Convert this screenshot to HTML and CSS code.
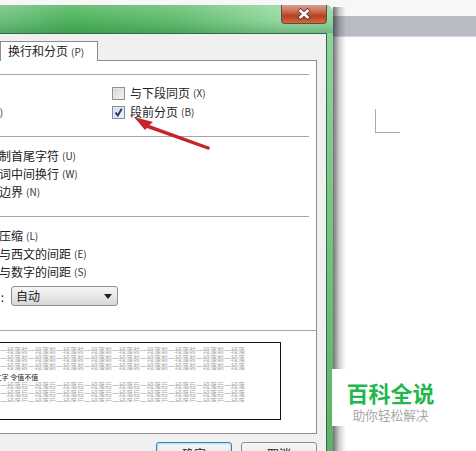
FILE: index.html
```html
<!DOCTYPE html>
<html>
<head>
    <meta charset="utf-8">
    <link rel="stylesheet" href="styles.css">
</head>
<body>
<div class="word">
    <div class="word-top"></div>
    <div class="word-ruler"></div>
    <div class="page-corner"></div>
</div>

<div class="dialog">
    <div class="titlebar">
        <div class="close-btn">
            <svg width="14" height="12" viewBox="0 0 14 12">
                <path d="M2 1.5 L12 10.5 M12 1.5 L2 10.5" stroke="#5a2a20" stroke-width="4.2" fill="none"/>
                <path d="M2.5 2 L11.5 10 M11.5 2 L2.5 10" stroke="#fff" stroke-width="2.6" fill="none"/>
            </svg>
        </div>
    </div>
    <div class="content">
        <div class="tabs">
            <div class="tab tab-back">缩进和间距(I)</div>
            <div class="tab tab-active">换行和分页<span class="key">(P)</span></div>
        </div>
        <div class="panel">
            <div class="section sec-page">
                <div class="page-grid">
                    <div class="opt"><span class="check"></span>孤行控制<span class="key">(W)</span></div>
                    <div class="opt"><span class="check"></span>与下段同页<span class="key">(X)</span></div>
                    <div class="opt"><span class="check"></span>段中不分页<span class="key">(K)</span></div>
                    <div class="opt">
                        <span class="check checked">
                            <svg width="11" height="11" viewBox="0 0 11 11"><path d="M2.5 5.5 L4.8 8.5 L8.8 1.8" stroke="#23406e" stroke-width="2" fill="none"/></svg>
                        </span>段前分页<span class="key">(B)</span>
                    </div>
                </div>
            </div>
            <div class="section sec-wrap">
                <div class="opt"><span class="check"></span>按中文习惯控制首尾字符<span class="key">(U)</span></div>
                <div class="opt"><span class="check"></span>允许西文在单词中间换行<span class="key">(W)</span></div>
                <div class="opt"><span class="check"></span>允许标点溢出边界<span class="key">(N)</span></div>
            </div>
            <div class="section sec-char">
                <div class="opt"><span class="check"></span>允许行首标点压缩<span class="key">(L)</span></div>
                <div class="opt"><span class="check"></span>自动调整中文与西文的间距<span class="key">(E)</span></div>
                <div class="opt"><span class="check"></span>自动调整中文与数字的间距<span class="key">(S)</span></div>
                <div class="align-row">
                    <div class="align-label"><span>文本对齐方式(A):</span></div>
                    <div class="select">自动<span class="select-arrow"></span></div>
                </div>
            </div>
            <div class="section sec-preview">
                <div class="preview">
                    <div class="pv-line">前一段落前一段落前一段落前一段落前一段落前一段落前一段落前一段落前一段落前一段落前一段落前一段落</div>
                    <div class="pv-line">前一段落前一段落前一段落前一段落前一段落前一段落前一段落前一段落前一段落前一段落前一段落前一段落</div>
                    <div class="pv-line">前一段落前一段落前一段落前一段落前一段落前一段落前一段落前一段落前一段落前一段落前一段落前一段落</div>
                    <div class="pv-sample">示例文字 示例文字 令值不值</div>
                    <div class="pv-line">后一段落后一段落后一段落后一段落后一段落后一段落后一段落后一段落后一段落后一段落后一段落后一段落</div>
                    <div class="pv-line">后一段落后一段落后一段落后一段落后一段落后一段落后一段落后一段落后一段落后一段落后一段落后一段落</div>
                    <div class="pv-line pv-cut">后一段落后一段落后一段落后一段落后一段落后一段落后一段落后一段落后一段落后一段落后一段落后一段落</div>
                </div>
            </div>
        </div>
        <div class="buttons">
            <div class="btn btn-default">确定</div>
            <div class="btn">取消</div>
        </div>
    </div>
</div>

<svg class="arrow" width="90" height="45" viewBox="0 0 90 45">
    <path d="M4 2 L23 7 L19.5 10 L80 32 L79 35 L17 13 L15 15 Z" fill="#c4242b"/>
</svg>

<div class="watermark">
    <div class="wm-title">百科全说</div>
    <div class="wm-sub">助你轻松解决</div>
</div>
</body>
</html>
```

FILE: styles.css
```css
html, body {
    margin: 0;
    padding: 0;
    width: 476px;
    height: 451px;
    overflow: hidden;
    background: #fff;
    font-family: "Noto Sans CJK SC", "Liberation Sans", sans-serif;
    font-size: 12px;
    color: #222;
}

.word-top {
    height: 16px;
    background: #f7f7f8;
}
.word-ruler {
    height: 20px;
    background: #b9bcc4;
    border-bottom: 1px solid #d5d6da;
}
.page-corner {
    width: 24px;
    height: 23px;
    margin: 72px 0 0 375px;
    border-left: 1px solid #aaa;
    border-bottom: 1px solid #aaa;
}

.dialog {
    position: absolute;
    left: -120px;
    top: 5px;
    width: 453px;
    height: 446px;
    overflow: hidden;
    box-sizing: border-box;
    border-radius: 7px 7px 0 0;
    background: linear-gradient(180deg, #93d5a0 0%, #7cc68a 40%, #5fb068 100%);
}
.titlebar {
    height: 28px;
    display: flex;
    justify-content: flex-end;
    padding-right: 6px;
    border-radius: 7px 7px 0 0;
    background:
        linear-gradient(180deg, rgba(255, 255, 255, 0.18) 0%, rgba(255, 255, 255, 0) 55%, rgba(20, 90, 40, 0.25) 100%),
        linear-gradient(90deg, #6fc080 0, #6fc080 120px, #4cb35a 190px, #62bd6f 300px, #93d89e 400px, #93d5a0 100%);
}
.close-btn {
    width: 46px;
    height: 19px;
    box-sizing: border-box;
    display: flex;
    align-items: center;
    justify-content: center;
    border: 1px solid #6b4a3c;
    border-top: none;
    border-radius: 0 0 4px 4px;
    background: linear-gradient(180deg, #d9a08e 0%, #c66f55 35%, #bb3f1c 60%, #cc6a45 100%);
}

.content {
    margin-right: 6px;
    height: 442px;
    box-sizing: border-box;
    border: 1px solid #2c6e3f;
    background: #f0f0f0;
}

.tabs {
    display: flex;
    padding: 7px 0 0 10px;
    margin-bottom: -1px;
}
.tab {
    height: 19px;
    line-height: 18px;
    box-sizing: content-box;
    border: 1px solid #898c95;
    border-bottom: none;
    background: #fff;
}
.tab-back {
    width: 108px;
    background: #e8e8e8;
}
.tab-active {
    width: 89px;
    padding-left: 7px;
    position: relative;
    z-index: 1;
    margin-left: -1px;
}

.panel {
    margin: 0 9px 0 9px;
    padding: 13px 7px 0;
    background: #fff;
    border: 1px solid #898c95;
    height: 359px;
    box-sizing: content-box;
}

.section {
    border-top: 1px solid #a5a5a5;
    padding-left: 11px;
}
.sec-page {
    padding-top: 8px;
    padding-bottom: 15px;
}
.sec-wrap {
    padding-top: 9px;
    padding-bottom: 16px;
}
.sec-char {
    padding-top: 9px;
    padding-bottom: 24px;
}
.sec-preview {
    padding: 11px 0 0;
    margin-right: -7px;
}

.page-grid {
    display: grid;
    grid-template-columns: 203px 1fr;
}
.page-grid .opt {
    height: 19px;
}

.opt {
    display: flex;
    align-items: center;
    height: 18px;
    white-space: nowrap;
}
.check {
    flex: none;
    width: 11px;
    height: 11px;
    margin: 2px 5px 0 0;
    border: 1px solid #8e8f8f;
    outline: 1px solid #e8e8e8;
    outline-offset: -2px;
    background: linear-gradient(135deg, #d4d4d4, #f6f6f6);
    display: flex;
    align-items: center;
    justify-content: center;
}
.check.checked {
    background: linear-gradient(135deg, #cfdcec, #f0f4f9);
    border-color: #7d8ea5;
}
.key {
    margin-left: 3px;
    font-size: 10px;
    color: #333;
}

.align-row {
    display: flex;
    align-items: center;
    margin-top: 6px;
    margin-left: 18px;
}
.align-label {
    width: 77px;
    margin-right: 7px;
    display: flex;
    justify-content: flex-end;
    white-space: nowrap;
}
.select {
    position: relative;
    width: 107px;
    height: 20px;
    line-height: 18px;
    box-sizing: border-box;
    padding-left: 4px;
    border: 1px solid #8e8f8f;
    border-radius: 3px;
    background: linear-gradient(180deg, #f6f6f6 0%, #e8e8e8 50%, #d6d6d6 100%);
}
.select-arrow {
    position: absolute;
    right: 5px;
    top: 7px;
    border-left: 4px solid transparent;
    border-right: 4px solid transparent;
    border-top: 5px solid #222;
}

.preview {
    height: 78px;
    box-sizing: border-box;
    margin-right: 35px;
    padding: 3px 35px 0 0;
    border: 1px solid #111;
    overflow: hidden;
    background: #fff;
}
.pv-line {
    height: 8px;
    line-height: 8px;
    font-size: 7px;
    color: #a5a5a5;
    text-align: right;
    white-space: nowrap;
}
.pv-sample {
    height: 8px;
    line-height: 8px;
    margin: 3px 0 0;
    padding-left: 52px;
    font-size: 7px;
    color: #222;
    white-space: nowrap;
}
.pv-cut {
    height: 5px;
    overflow: hidden;
}

.buttons {
    display: flex;
    justify-content: flex-end;
    gap: 9px;
    margin: 8px 9px 0 0;
}
.btn {
    width: 76px;
    height: 23px;
    box-sizing: border-box;
    line-height: 21px;
    text-align: center;
    border: 1px solid #8e8f8f;
    border-radius: 3px;
    background: linear-gradient(180deg, #f6f6f6, #e2e2e2);
}
.btn-default {
    border-color: #3c7fb1;
    box-shadow: inset 0 0 2px 1px #a9e0f5;
}

/* dialog shadow falling on the document behind it */
.word::after {
    content: "";
    position: absolute;
    left: 333px;
    top: 7px;
    width: 13px;
    height: 444px;
    background: linear-gradient(90deg, rgba(0, 0, 0, 0.55), rgba(0, 0, 0, 0.18) 50%, rgba(0, 0, 0, 0));
}

.arrow {
    position: absolute;
    left: 130px;
    top: 115px;
}

.watermark {
    position: absolute;
    left: 332px;
    top: 369px;
    width: 117px;
    height: 57px;
    padding-right: 27px;
    background: #fff;
    display: flex;
    flex-direction: column;
    align-items: center;
}
.wm-title {
    margin-top: 8px;
    font-size: 22px;
    line-height: 30px;
    font-weight: 700;
    color: #1fb84f;
}
.wm-sub {
    font-size: 12.7px;
    line-height: 16px;
    color: #a8a8a8;
    white-space: nowrap;
}
```
